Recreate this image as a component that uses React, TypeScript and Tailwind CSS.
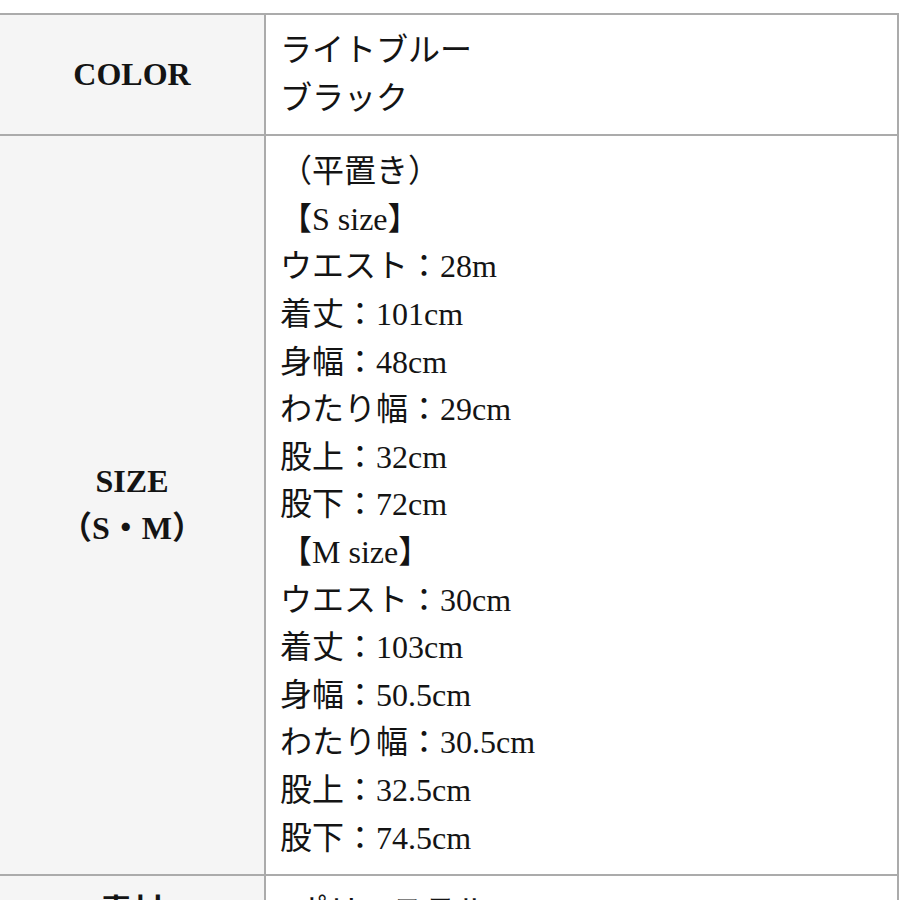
const font = "font-['Liberation_Serif','Noto_Sans_CJK_JP',serif]"

const sizeLines = [
  '（平置き）',
  '【S size】',
  'ウエスト：28m',
  '着丈：101cm',
  '身幅：48cm',
  'わたり幅：29cm',
  '股上：32cm',
  '股下：72cm',
  '【M size】',
  'ウエスト：30cm',
  '着丈：103cm',
  '身幅：50.5cm',
  'わたり幅：30.5cm',
  '股上：32.5cm',
  '股下：74.5cm',
]

function Row({ head, lines }: { head: string[]; lines: string[] }) {
  return (
    <div className="flex border-b-2 border-[#ababab]">
      <div className="w-[266px] shrink-0 bg-[#f5f5f5] border-r-2 border-[#ababab] flex flex-col items-center justify-center font-bold">
        {head.map((h) => (
          <div key={h}>{h}</div>
        ))}
      </div>
      <div className="flex-1 pl-[14px] py-3">
        {lines.map((l, i) => (
          <div key={i} className="whitespace-pre">{l}</div>
        ))}
      </div>
    </div>
  )
}

export default function App() {
  return (
    <div className={`w-[900px] h-[900px] overflow-hidden bg-white pt-[13px] text-[32px] leading-[47.6px] text-[#141414] ${font}`}>
      <div className="w-[899px] border-t-2 border-r-2 border-[#ababab]">
        <Row head={['COLOR']} lines={['ライトブルー', 'ブラック']} />
        <Row head={['SIZE', '（S・M）']} lines={sizeLines} />
        <Row head={['素材']} lines={['  ポリエステル', '']} />
      </div>
    </div>
  )
}
